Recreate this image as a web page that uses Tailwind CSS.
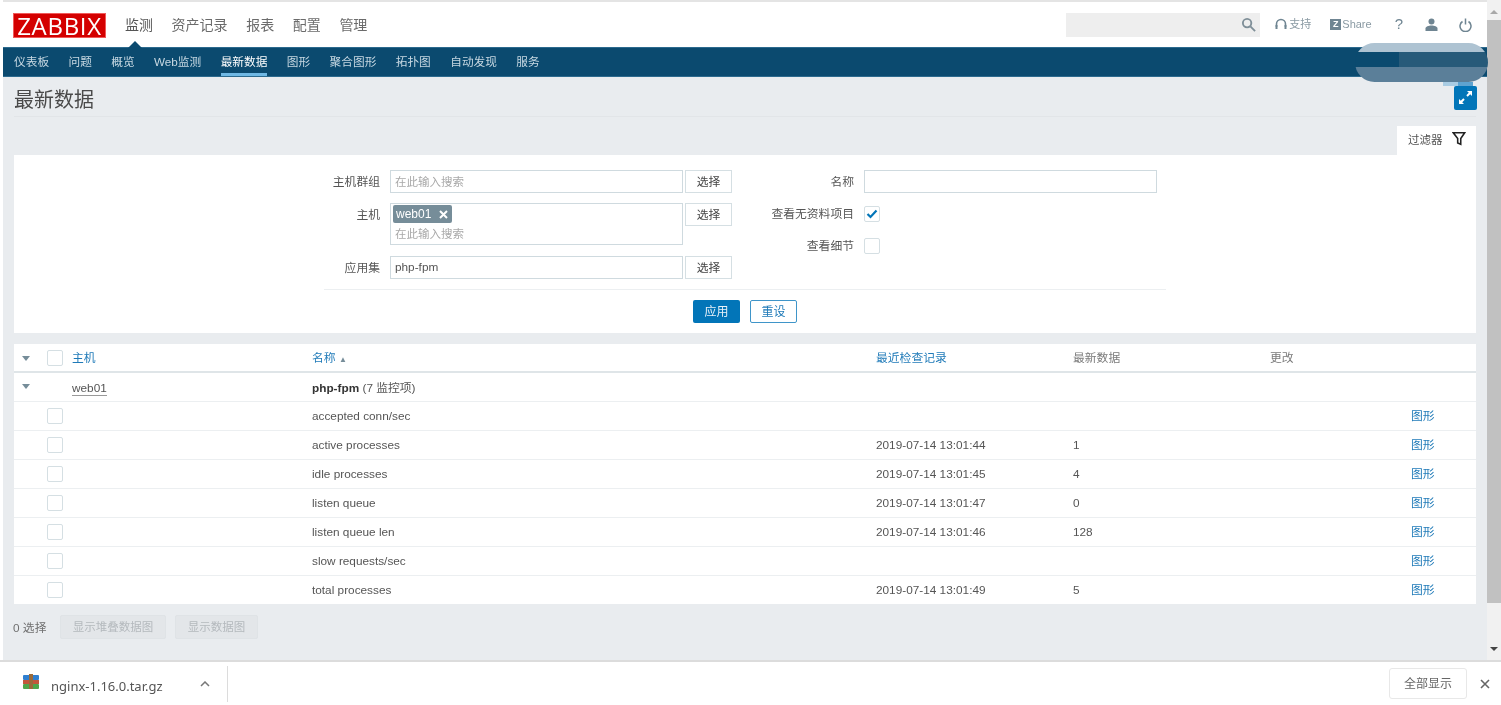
<!DOCTYPE html>
<html lang="zh-CN">
<head>
<meta charset="utf-8">
<title>最新数据</title>
<script src="https://cdn.jsdelivr.net/npm/@tailwindcss/browser@4"></script>
</head>
<body class="bg-white">
<div class="relative w-[1501px] h-[705px] overflow-hidden bg-white text-[11.800px] text-[#555] font-['Liberation_Sans','Noto_Sans_CJK_SC',sans-serif] blur-[0.5px]">
  <div class="flex h-[660px]">
    <!-- page -->
    <div class="w-[1487px] pl-[3px] flex flex-col">
      <div class="h-[2px] bg-[#e4e4e4]"></div>
      <header class="h-[45px] flex items-center bg-white">
        <div class="ml-[10px] mt-[1px] w-[93px] h-[25px] bg-[#d40000] border border-[#f05a5a] text-white text-[24px] leading-[23px] text-center tracking-[0.7px] font-['Open_Sans',sans-serif] font-normal">ZABBIX</div>
        <nav class="ml-[19px] mt-[1px] flex gap-[18.600px] text-[14px] text-[#6b6b6b]">
          <span class="text-[#555]">监测</span><span>资产记录</span><span>报表</span><span>配置</span><span>管理</span>
        </nav>
        <div class="ml-auto mr-[15px] flex items-center text-[11px] text-[#8a9aa3]">
          <div class="w-[194px] h-[24px] bg-[#eeeeee] flex items-center justify-end pr-[4px]">
            <svg class="w-[15px] h-[15px]" viewBox="0 0 16 16" fill="none" stroke="#7f8f98" stroke-width="2"><circle cx="6.5" cy="6.5" r="4.5"/><path d="M10 10l5 5"/></svg>
          </div>
          <svg class="ml-[15px] w-[12px] h-[13px]" viewBox="0 0 12 13" fill="none" stroke="#6f8592" stroke-width="1.6"><path d="M1.5 9V6a4.5 4.5 0 019 0v3"/><rect x="0.5" y="7" width="2" height="4" fill="#6f8592" stroke="none"/><rect x="9.5" y="7" width="2" height="4" fill="#6f8592" stroke="none"/></svg>
          <span class="ml-[2px]">支持</span>
          <span class="ml-[19px] w-[11px] h-[11px] bg-[#6f8592] text-white text-[9px] leading-[11px] text-center font-bold">Z</span>
          <span class="ml-[1px]">Share</span>
          <span class="ml-[23px] text-[15px] text-[#6f8592]">?</span>
          <svg class="ml-[22px] w-[13px] h-[13px]" viewBox="0 0 13 13" fill="#6f8592"><circle cx="6.5" cy="3.5" r="3"/><path d="M0.5 13v-2.5C0.5 8.500 3.500 7.500 6.500 7.500s6 1 6 3V13z"/></svg>
          <svg class="ml-[21px] w-[13px] h-[14px]" viewBox="0 0 13 14" fill="none" stroke="#6f8592" stroke-width="1.5"><path d="M3.500 3.500a5.500 5.500 0 106 0M6.500 0.500v6"/></svg>
        </div>
      </header>
      <nav class="relative h-[30px] bg-[#0b4a6f] border-y border-[#2c6a8e] flex gap-[19.400px] pl-[11px] text-[11.700px] text-[#c7d8e2] leading-[28px]">
        <span class="absolute left-[125px] -top-[7px] w-0 h-0 border-x-[7px] border-x-transparent border-b-[7px] border-b-[#0b4a6f]"></span>
        <span>仪表板</span><span>问题</span><span>概览</span><span>Web监测</span>
        <span class="relative text-white">最新数据<span class="absolute left-0 right-0 bottom-0 h-[3px] bg-[#6fb8e4]"></span></span>
        <span>图形</span><span>聚合图形</span><span>拓扑图</span><span>自动发现</span><span>服务</span>
      </nav>
      <main class="flex-1 bg-[#e9ecef] flex flex-col pl-[11px] pr-[11px]">
        <div class="h-[40px] flex items-center justify-between border-b border-[#e2e5e8]">
          <h1 class="text-[20px] leading-[44px] pt-[6px] text-[#4a4a4a]">最新数据</h1>
          <div class="w-[23px] h-[24px] mt-[2px] -mr-[1px] rounded-[2px] bg-[#0275b8] flex items-center justify-center">
            <svg class="w-[15px] h-[15px]" viewBox="0 0 15 15" fill="#fff"><path d="M14 1v5l-1.800-1.800-2.500 2.500-1.400-1.400 2.500-2.500L9 1zM1 14V9l1.800 1.800 2.500-2.500 1.400 1.400-2.500 2.500L6 14z"/></svg>
          </div>
        </div>
        <div class="mt-[9px] h-[29px] flex justify-end">
          <div class="w-[79px] bg-white flex items-center pl-[11px] text-[#555] gap-[9px]">
            <span class="text-[11.500px]">过滤器</span>
            <svg class="w-[14px] h-[15px] -mt-[4px]" viewBox="0 0 16 16" fill="none" stroke="#222" stroke-width="1.800"><path d="M1.500 1.500h13L10 8v6.500L6.500 13V8z"/></svg>
          </div>
        </div>
        <!-- filter -->
        <section class="h-[178px] bg-white flex flex-col pt-[15px]">
          <div class="flex">
            <div class="ml-[298px] grid grid-cols-[68px_293px_47px] gap-x-[2px] h-[119px] content-start">
              <div class="h-[23px] leading-[24px] text-right">主机群组</div>
              <div class="ml-[8px] w-[293px] h-[23px] border border-[#cfdadf] text-[#a9a9a9] pl-[4px] leading-[22px] text-[11.500px]">在此输入搜索</div>
              <div class="ml-[8px] w-[47px] h-[23px] border border-[#d5dfe3] text-center leading-[22px] text-[#444]">选择</div>
              <div class="mt-[10px] h-[23px] leading-[24px] text-right">主机</div>
              <div class="ml-[8px] mt-[10px] w-[293px] h-[42px] border border-[#cfdadf] text-[#a9a9a9] pl-[2px] pt-[1px] text-[11.500px]">
                <div class="w-[59px] h-[18px] rounded-[2px] bg-[#768d99] text-white flex items-center justify-between px-[3px] text-[12px]"><span>web01</span><svg class="w-[9px] h-[9px] mr-[1px]" viewBox="0 0 9 9" stroke="#fff" stroke-width="2"><path d="M1 1l7 7M8 1L1 8"/></svg></div>
                <div class="pl-[2px] mt-[4px] leading-[14px]">在此输入搜索</div>
              </div>
              <div class="ml-[8px] mt-[10px] w-[47px] h-[23px] border border-[#d5dfe3] text-center leading-[22px] text-[#444]">选择</div>
              <div class="mt-[11px] h-[23px] leading-[24px] text-right">应用集</div>
              <div class="ml-[8px] mt-[11px] w-[293px] h-[23px] border border-[#cfdadf] pl-[4px] leading-[21px]">php-fpm</div>
              <div class="ml-[8px] mt-[11px] w-[47px] h-[23px] border border-[#d5dfe3] text-center leading-[22px] text-[#444]">选择</div>
            </div>
            <div class="ml-[40px] w-[90px] text-right flex flex-col">
              <div class="h-[23px] leading-[24px]">名称</div>
              <div class="mt-[9px] h-[23px] leading-[24px] whitespace-nowrap">查看无资料项目</div>
              <div class="mt-[9px] h-[23px] leading-[24px]">查看细节</div>
            </div>
            <div class="ml-[10px] flex flex-col">
              <div class="w-[293px] h-[23px] border border-[#cfdadf]"></div>
              <div class="mt-[13px] w-[16px] h-[16px] border border-[#d5dfe3] rounded-[2px] flex items-center justify-center">
                <svg class="w-[12px] h-[10px]" viewBox="0 0 12 10" fill="none" stroke="#0275b8" stroke-width="2.200"><path d="M1.500 5l3 3 6-6.500"/></svg>
              </div>
              <div class="mt-[16px] w-[16px] h-[16px] border border-[#d5dfe3] rounded-[2px]"></div>
            </div>
          </div>
          <div class="ml-[310px] w-[842px] border-t border-[#eceff1]"></div>
          <div class="mt-[10px] flex justify-center gap-[10px]">
            <button class="w-[47px] h-[23px] rounded-[2px] bg-[#0275b8] text-[#e8f2f9] text-[12px]">应用</button>
            <button class="w-[47px] h-[23px] rounded-[2px] bg-white border border-[#3f95c9] text-[#1f7ab8] text-[12px]">重设</button>
          </div>
        </section>
        <!-- table -->
        <section class="mt-[11px] bg-white">
          <div class="h-[29px] border-b-2 border-[#dfe5e8] grid grid-cols-[33px_25px_240px_564px_197px_197px_141px_65px] items-center text-[#7a7a7a] [&>span]:pt-[2px]">
            <span class="pl-[8px]"><span class="block w-0 h-0 border-x-[4px] border-x-transparent border-t-[5px] border-t-[#768d99]"></span></span>
            <span class="block w-[16px] h-[16px] border border-[#d5dfe3] rounded-[2px]"></span>
            <span class="text-[#1f7ab8]">主机</span>
            <span class="text-[#1f7ab8]">名称 <span class="text-[8px] text-[#768d99]">▲</span></span>
            <span class="text-[#1f7ab8]">最近检查记录</span>
            <span>最新数据</span>
            <span>更改</span>
            <span></span>
          </div>
          <div class="h-[29px] pt-[4px] border-b border-[#eceff1] grid grid-cols-[33px_25px_240px_564px_197px_197px_141px_65px] items-center">
            <span class="pl-[8px] -mt-[5px]"><span class="block w-0 h-0 border-x-[4px] border-x-transparent border-t-[5px] border-t-[#768d99]"></span></span>
            <span></span>
            <span class="justify-self-start border-b border-[#999] leading-[13px]">web01</span>
            <span><b class="text-[#333]">php-fpm</b> (7 监控项)</span>
            <span></span><span></span><span></span><span></span>
          </div>
          <div class="h-[29px] border-b border-[#eceff1] grid grid-cols-[33px_25px_240px_564px_197px_197px_141px_65px] items-center [&>span]:pt-[2px]">
            <span></span><span class="block w-[16px] h-[16px] border border-[#d5dfe3] rounded-[2px]"></span><span></span>
            <span>accepted conn/sec</span><span></span><span></span><span></span><span class="text-[#1f7ab8]">图形</span>
          </div>
          <div class="h-[29px] border-b border-[#eceff1] grid grid-cols-[33px_25px_240px_564px_197px_197px_141px_65px] items-center [&>span]:pt-[2px]">
            <span></span><span class="block w-[16px] h-[16px] border border-[#d5dfe3] rounded-[2px]"></span><span></span>
            <span>active processes</span><span>2019-07-14 13:01:44</span><span>1</span><span></span><span class="text-[#1f7ab8]">图形</span>
          </div>
          <div class="h-[29px] border-b border-[#eceff1] grid grid-cols-[33px_25px_240px_564px_197px_197px_141px_65px] items-center [&>span]:pt-[2px]">
            <span></span><span class="block w-[16px] h-[16px] border border-[#d5dfe3] rounded-[2px]"></span><span></span>
            <span>idle processes</span><span>2019-07-14 13:01:45</span><span>4</span><span></span><span class="text-[#1f7ab8]">图形</span>
          </div>
          <div class="h-[29px] border-b border-[#eceff1] grid grid-cols-[33px_25px_240px_564px_197px_197px_141px_65px] items-center [&>span]:pt-[2px]">
            <span></span><span class="block w-[16px] h-[16px] border border-[#d5dfe3] rounded-[2px]"></span><span></span>
            <span>listen queue</span><span>2019-07-14 13:01:47</span><span>0</span><span></span><span class="text-[#1f7ab8]">图形</span>
          </div>
          <div class="h-[29px] border-b border-[#eceff1] grid grid-cols-[33px_25px_240px_564px_197px_197px_141px_65px] items-center [&>span]:pt-[2px]">
            <span></span><span class="block w-[16px] h-[16px] border border-[#d5dfe3] rounded-[2px]"></span><span></span>
            <span>listen queue len</span><span>2019-07-14 13:01:46</span><span>128</span><span></span><span class="text-[#1f7ab8]">图形</span>
          </div>
          <div class="h-[29px] border-b border-[#eceff1] grid grid-cols-[33px_25px_240px_564px_197px_197px_141px_65px] items-center [&>span]:pt-[2px]">
            <span></span><span class="block w-[16px] h-[16px] border border-[#d5dfe3] rounded-[2px]"></span><span></span>
            <span>slow requests/sec</span><span></span><span></span><span></span><span class="text-[#1f7ab8]">图形</span>
          </div>
          <div class="h-[28px] grid grid-cols-[33px_25px_240px_564px_197px_197px_141px_65px] items-center [&>span]:pt-[2px]">
            <span></span><span class="block w-[16px] h-[16px] border border-[#d5dfe3] rounded-[2px]"></span><span></span>
            <span>total processes</span><span>2019-07-14 13:01:49</span><span>5</span><span></span><span class="text-[#1f7ab8]">图形</span>
          </div>
        </section>
        <div class="mt-[11px] flex items-center text-[#6f6f6f]">
          <span class="-ml-[1px] w-[47px] pt-[3px]">0 选择</span>
          <span class="w-[106px] h-[24px] bg-[#e3e6e9] border border-[#dfe3e6] rounded-[2px] text-center leading-[23px] text-[#b4b9bd] text-[11.500px]">显示堆叠数据图</span>
          <span class="ml-[9px] w-[83px] h-[24px] bg-[#e3e6e9] border border-[#dfe3e6] rounded-[2px] text-center leading-[23px] text-[#b4b9bd] text-[11.500px]">显示数据图</span>
        </div>
      </main>
    </div>
    <!-- scrollbar -->
    <div class="w-[14px] bg-[#f1f1f1] flex flex-col items-center pt-[2px]">
      <span class="mt-[8px] w-0 h-0 border-x-[4px] border-x-transparent border-b-[4px] border-b-[#a8a8a8]"></span>
      <span class="mt-[6px] w-full h-[583px] bg-[#c1c1c1]"></span>
      <span class="mt-[44px] w-0 h-0 border-x-[4px] border-x-transparent border-t-[4px] border-t-[#444]"></span>
    </div>
  </div>
  <!-- download bar -->
  <footer class="h-[45px] bg-white border-t-2 border-[#dcdcdc] flex items-center">
    <svg class="ml-[23px] w-[16px] h-[16px] -mt-[3px]" viewBox="0 0 16 16"><rect x="0" y="1" width="16" height="5" rx="1" fill="#2f7fd0"/><rect x="0" y="6" width="16" height="4" fill="#c2573a"/><rect x="0" y="10" width="16" height="5" rx="1" fill="#4ea64a"/><rect x="6" y="0" width="4" height="15" fill="#9a6a3a"/></svg>
    <span class="ml-[12px] mt-[7px] text-[13px] text-[#555] font-['Noto_Sans',sans-serif]">nginx-1.16.0.tar.gz</span>
    <svg class="ml-[37px] w-[10px] h-[6px]" viewBox="0 0 10 6" fill="none" stroke="#777" stroke-width="1.500"><path d="M1 5l4-4 4 4"/></svg>
    <span class="ml-[17px] w-px h-[36px] bg-[#dcdcdc]"></span>
    <button class="ml-auto w-[78px] h-[31px] border border-[#e8e8e8] rounded-[3px] text-[12px] text-[#666]">全部显示</button>
    <svg class="ml-[13px] mr-[11px] w-[10px] h-[10px]" viewBox="0 0 10 10" fill="none" stroke="#666" stroke-width="1.600"><path d="M1 1l8 8M9 1L1 9"/></svg>
  </footer>
  <!-- scribbled-out area -->
  <div class="absolute left-[1355px] top-[43px] w-[133px] h-[39px] rounded-[20px] overflow-hidden flex flex-col">
    <div class="h-[9px] bg-[#aec3d2]"></div>
    <div class="h-[15px] flex"><div class="w-[44px] bg-[#0b4a6f]"></div><div class="flex-1 bg-[#275a79]"></div></div>
    <div class="flex-1 bg-[#5b7f99]"></div>
  </div>
  <div class="absolute left-[1443px] top-[82px] h-[4px] w-[30px] flex"><div class="flex-1 bg-[#a9cce3]"></div><div class="flex-1 bg-[#5ea3d0]"></div></div>
</div>
</body>
</html>
